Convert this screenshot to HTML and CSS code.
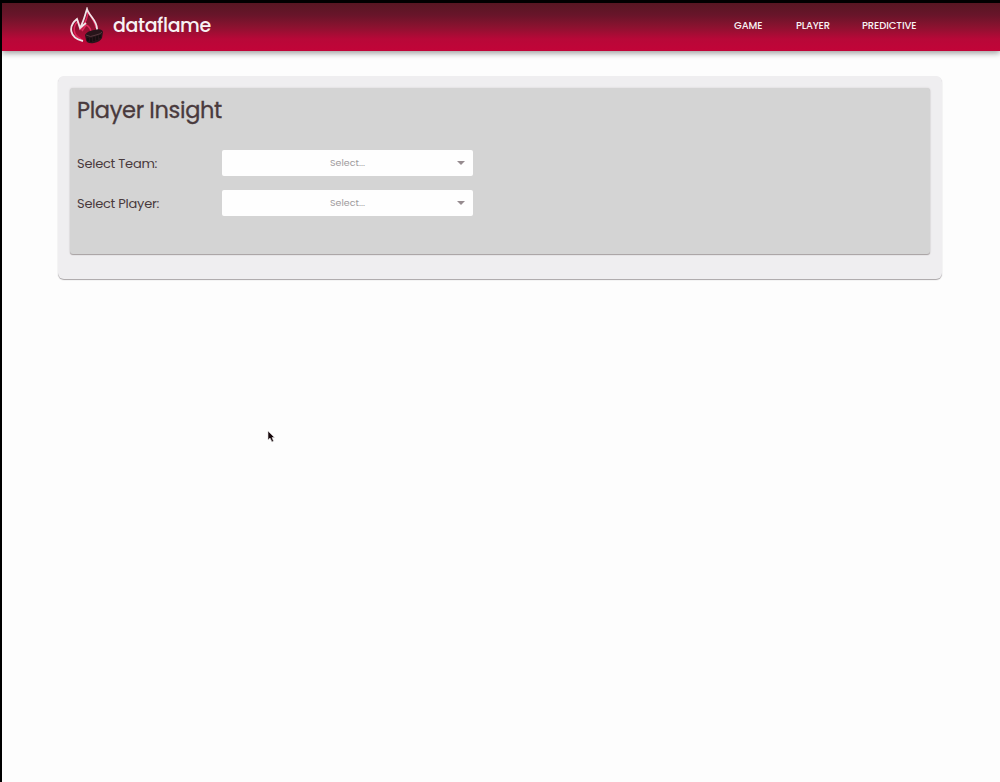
FILE: index.html
```html
<!DOCTYPE html>
<html lang="en">
<head>
<meta charset="utf-8">
<title>dataflame</title>
<link rel="stylesheet" href="styles.css">
</head>
<body>
<header class="navbar">
  <a class="brand">
    <svg class="logo" width="37" height="39" viewBox="0 0 37 39" fill="none">
      <path class="flame-shade" d="M12 32C3 28 4 19 9 14L12 22C17 15 19 9 19 4C22 11 26 14 27 21M13 24L17 18C20 19 21 21 22 24"/>
      <path class="flame" d="M14 34C0 31 -1 19 8 12L11 21C15 14 16 8 18 2C20 9 29 14 28 23M11 21L17 16"/>
      <path d="M16 28Q18 24 25 23Q33 21 34 25L33 31Q31 35 25 36Q18 37 17 33Z" fill="#27141a"/>
      <path d="M17 28Q21 31 27 28Q32 27 33 25" stroke="#57383e" stroke-width="1"/>
      <path d="M19 31v3M22 31v4M25 30v4M28 29v4M31 28v3" stroke="#080607" stroke-width="1"/>
    </svg>
    <span class="brand-name">dataflame</span>
  </a>
  <nav class="links">
    <a class="game">GAME</a><a class="player">PLAYER</a><a class="predictive">PREDICTIVE</a>
  </nav>
</header>
<main class="panel">
  <section class="card">
    <h1>Player Insight</h1>
    <div class="row">
      <label>Select Team:</label>
      <div class="select"><span>Select...</span><i class="arrow"></i></div>
    </div>
    <div class="row">
      <label>Select Player:</label>
      <div class="select"><span>Select...</span><i class="arrow"></i></div>
    </div>
  </section>
</main>
<svg class="cursor" width="10" height="14" viewBox="0 0 10 14"><path d="M1 1V10L3 8L5 12L6.500 11L5 7.500H7.500Z" fill="#17080c" stroke="#ddd" stroke-width=".6"/></svg>
</body>
</html>
```
FILE: styles.css
```css
* { box-sizing: border-box; }
body {
  margin: 0;
  height: 782px;
  overflow: hidden;
  border-top: 3px solid #000;
  border-left: 2px solid #000;
  background: #fdfdfd;
  color: #493a3d;
  font-family: Poppins, Inter, sans-serif;
}
.navbar {
  height: 48px;
  display: flex;
  justify-content: space-between;
  padding: 0 83px 0 67px;
  background: linear-gradient(#571622 0%, #68152a 25%, #8c1230 50%, #b80838 75%, #c20438 100%);
  box-shadow: 0 2px 6px rgba(0, 0, 0, .4);
  color: #f8f2f4;
}
.brand { display: flex; align-items: flex-start; padding-top: 4px; }
.logo { flex: none; }
.flame { stroke: #f0e5e8; stroke-width: 1.8; }
.flame-shade { stroke: #df285b; stroke-width: 1.5; }
.brand-name {
  margin: 5px 0 0 7px;
  font-size: 19px;
  line-height: 28px;
  font-weight: 500;
  letter-spacing: -.4px;
}
.links {
  display: flex;
  height: 45px;
  align-items: center;
  font-size: 10px;
  font-weight: 500;
}
.links a { white-space: nowrap; }
.game { width: 62px; letter-spacing: -.1px; }
.player { width: 66px; letter-spacing: -.2px; }
.predictive { width: 55px; letter-spacing: -.1px; }
.panel {
  width: 884px;
  height: 203px;
  margin: 25px 0 0 56px;
  padding: 12px;
  background: #efeef0;
  border-radius: 6px;
  box-shadow: 0 1px 1px rgba(40, 30, 35, .4);
}
.card {
  height: 166px;
  padding: 7px;
  background: #d4d4d4;
  border-radius: 3px;
  box-shadow: 0 1px 1px #a69fa0, 0 0 2px #d2cdcf;
}
h1 {
  margin: 0 0 25px;
  height: 30px;
  font-size: 22.5px;
  line-height: 30px;
  font-weight: 400;
  letter-spacing: -.35px;
  -webkit-text-stroke: .3px #493a3d;
}
.row { height: 26px; display: flex; align-items: center; margin-bottom: 14px; }
.row label { width: 145px; padding-top: 1px; font-size: 13px; letter-spacing: -.25px; }
.select {
  width: 251px;
  height: 26px;
  background: #fefefe;
  border-radius: 2px;
  display: flex;
  align-items: center;
  justify-content: space-between;
  padding: 0 8px 0 108px;
  color: #a09b9d;
  font-size: 9.5px;
}
.arrow {
  border: 4px solid transparent;
  border-top-color: #968b8f;
  border-bottom: 0;
}
.cursor { position: absolute; left: 267px; top: 430px; }
```
